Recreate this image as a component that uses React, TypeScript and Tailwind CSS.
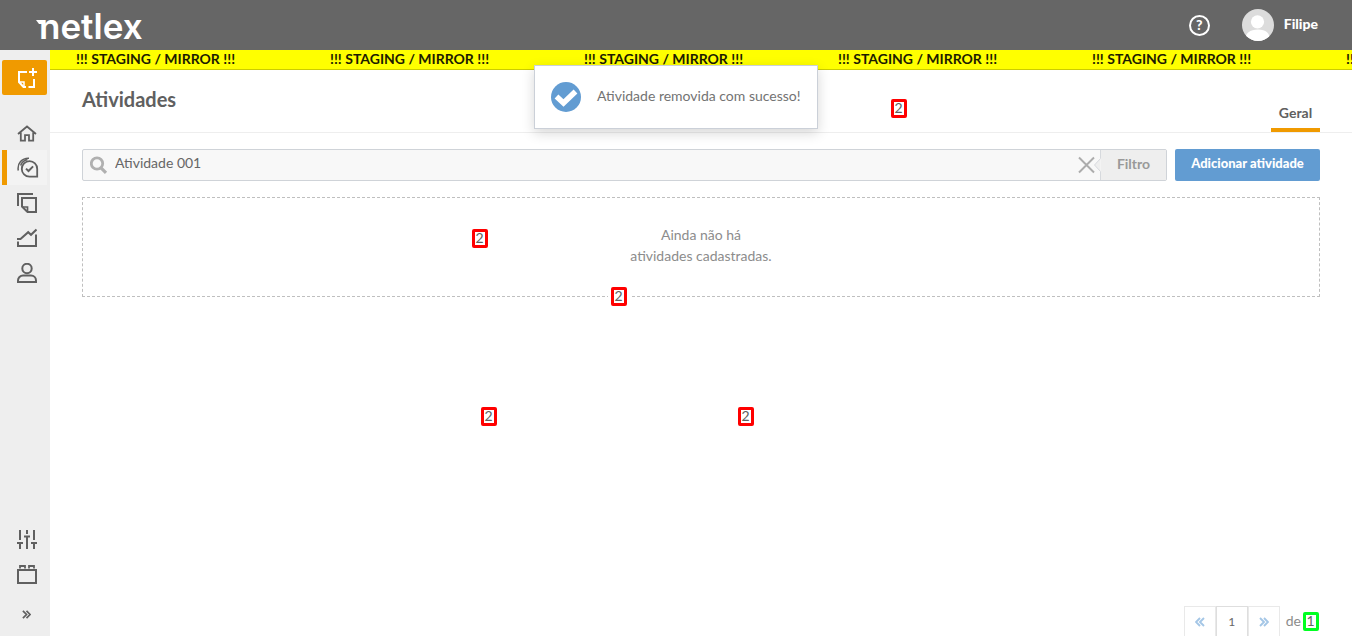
import type { ReactNode } from "react";

function Icon({ children }: { children: ReactNode }) {
  return (
    <svg width="20" height="20" viewBox="0 0 20 20" fill="none" stroke="currentColor" strokeWidth="2" aria-hidden="true">
      {children}
    </svg>
  );
}

const mainLinks = [
  {
    label: "Início",
    icon: (
      <Icon>
        <path d="M1 11 10 3.500l9 7.500M3.800 9.500v8.200h4.200v-5.500h4v5.500h4.200V9.500" strokeWidth="1.800" />
      </Icon>
    ),
  },
  {
    label: "Atividades",
    active: true,
    icon: (
      <svg className="mr-0.5" width="22" height="21" viewBox="0 0 22 21" fill="none" stroke="currentColor" strokeWidth="1.800" aria-hidden="true">
        <path d="M12.500 4.200a7.700 7.700 0 0 1 7.700 7.700v7.700h-7.700a7.700 7.700 0 0 1 0-15.400Z" />
        <path d="m9 11.600 2.500 2.400 4.600-4.600" strokeWidth="2" />
        <path d="M1.300 13.500C0 6.500 5 .9 12 1.200M3.600 8.500C4.800 5.200 7.500 3.300 10.500 2.800" strokeWidth="1.500" />
      </svg>
    ),
  },
  {
    label: "Documentos",
    icon: (
      <Icon>
        <path d="M16 1H1v12" />
        <path d="M5 5h14v14h-8.500L5 13.500V5Z" />
        <path d="M5 14h5.500V19" strokeWidth="1.700" />
      </Icon>
    ),
  },
  {
    label: "Relatórios",
    icon: (
      <Icon>
        <path d="M0 11h3.500l7.700-6.800 2.800 2.600 5.500-5.300" />
        <path d="M1 13.500V18h18V6.500" />
      </Icon>
    ),
  },
  {
    label: "Usuários",
    icon: (
      <Icon>
        <circle cx="10" cy="5.500" r="4.700" />
        <path d="M1 19v-1.500a5 5 0 0 1 5-5h8a5 5 0 0 1 5 5V19H1Z" />
      </Icon>
    ),
  },
];

const footerLinks = [
  {
    label: "Configurações",
    icon: (
      <Icon>
        <path d="M3 0v10M3 14v5M10 0v4M10 7v12M17 0v10M17 14v5" />
        <path d="M0 13h6M7 6.500h6M14 13h6" />
      </Icon>
    ),
  },
  {
    label: "Pacotes",
    icon: (
      <Icon>
        <path d="M1 5h18v13H1Z" />
        <path d="M3 3.500V1h5v2.500M12 3.500V1h5v2.500" strokeWidth="1.800" />
      </Icon>
    ),
  },
];

function RailLink({ label, icon, active }: { label: string; icon: ReactNode; active?: boolean }) {
  return (
    <a
      href="#"
      aria-label={label}
      className={
        active
          ? "flex h-[35px] items-center justify-center border-l-[5px] border-[#f09a00] bg-[#f3f3f3] pl-1"
          : "flex h-[35px] items-center justify-center pl-1"
      }
    >
      {icon}
    </a>
  );
}

function Marker({ value, place, color }: { value: string; place: string; color: string }) {
  return (
    <span
      className={`absolute flex h-[19px] w-4 items-center justify-center rounded-xs border-3 bg-white pr-px pb-0.5 text-sm leading-none ${color} ${place}`}
    >
      {value}
    </span>
  );
}

function Chevrons({ flip, size }: { flip?: boolean; size: number }) {
  return (
    <svg width={size} height={size} viewBox="0 0 10 10" fill="none" stroke="currentColor" strokeWidth="1.900" aria-hidden="true">
      <path d={flip ? "M5 1 1 5l4 4M9 1 5 5l4 4" : "m1 1 4 4-4 4M5 1l4 4-4 4"} />
    </svg>
  );
}

function TopBar() {
  return (
    <header className="flex h-[50px] shrink-0 items-center justify-between bg-[#666] pr-[34px] pl-9 text-white">
      <a href="#" className="relative pt-0.5 pl-[3px] font-[Inter,sans-serif] text-[35px] leading-[50px] font-semibold">
        <svg className="absolute top-[21px] left-0" width="9" height="4" viewBox="0 0 9 4" fill="currentColor" aria-hidden="true">
          <path d="M0 0h9v4H3Z" />
        </svg>
        netlex
      </a>
      <div className="flex items-center">
        <button type="button" aria-label="Ajuda" className="mr-8 flex h-[21px] w-[21px] items-center justify-center rounded-full border-2 border-white text-sm leading-none font-black">
          ?
        </button>
        <svg width="32" height="32" viewBox="0 0 32 32" aria-hidden="true">
          <defs>
            <clipPath id="avatar">
              <circle cx="16" cy="16" r="16" />
            </clipPath>
          </defs>
          <g clipPath="url(#avatar)">
            <path fill="#dcdcdc" d="M0 0h32v32H0z" />
            <circle cx="15.500" cy="12.800" r="6.600" fill="#fff" />
            <path fill="#fff" d="M3 32c0-8 5-11.500 13-11.500S28 24 28 32Z" />
          </g>
        </svg>
        <a href="#" className="ml-[10px] pb-0.5 text-sm font-black">
          Filipe
        </a>
      </div>
    </header>
  );
}

function Rail() {
  return (
    <aside className="flex w-[50px] shrink-0 flex-col bg-[#eee] px-0.5 pt-[10px] pb-1 text-[#606060]">
      <button type="button" aria-label="Novo documento" className="mr-px flex h-[35px] shrink-0 items-center justify-center rounded-xs bg-[#f09a00] pl-1 text-white">
        <svg width="20" height="20" viewBox="0 0 20 20" fill="none" stroke="currentColor" strokeWidth="2" aria-hidden="true">
          <path d="M10 4H2V14l4.500 5H9M11.500 19H17V11" />
          <path d="M2 14h5v4.500" strokeWidth="1.500" />
          <path d="M16 0v8M12 4h8" />
        </svg>
      </button>
      <nav aria-label="Principal" className="mt-5 mr-px">
        {mainLinks.map((link) => (
          <RailLink key={link.label} {...link} />
        ))}
      </nav>
      <nav aria-label="Ferramentas" className="mt-auto mr-px">
        {footerLinks.map((link) => (
          <RailLink key={link.label} {...link} />
        ))}
        <button type="button" aria-label="Expandir menu" className="mt-1 flex h-9 w-full items-center justify-center pl-1">
          <Chevrons size={9} />
        </button>
      </nav>
    </aside>
  );
}

function Toast() {
  return (
    <div role="status" className="absolute top-[65px] left-1/2 flex h-16 w-[284px] -translate-x-1/2 items-center border border-[#cbd0d8] bg-white pl-4 text-sm text-[#737373] shadow-[0_4px_12px_rgba(0,0,0,0.16)]">
      <svg className="mr-4 shrink-0" width="30" height="30" viewBox="0 0 30 30" aria-hidden="true">
        <circle cx="15" cy="15" r="15" fill="#629cd2" />
        <path d="m5.500 14.500 7 6.500L24.500 9.500" fill="none" stroke="#fff" strokeWidth="5.500" />
      </svg>
      <span className="pb-0.5 whitespace-nowrap">Atividade removida com sucesso!</span>
    </div>
  );
}

function SearchBar() {
  return (
    <form className="flex gap-2" onSubmit={(event) => event.preventDefault()}>
      <div className="flex h-8 flex-1 items-center rounded-xs border border-[#cfd3d8] bg-[#f8f8f8]">
        <svg className="ml-[7px] shrink-0" width="18" height="18" viewBox="0 0 18 18" fill="none" stroke="#b0b0b0" aria-hidden="true">
          <circle cx="7" cy="7.500" r="5.700" strokeWidth="2.800" />
          <path d="m11 11.800 5 5" strokeWidth="3.200" />
        </svg>
        <input
          aria-label="Buscar atividade"
          defaultValue="Atividade 001"
          className="h-full min-w-0 flex-1 bg-transparent pb-1.5 pl-[7px] text-sm text-[#666] outline-none"
        />
        <button type="button" aria-label="Limpar busca" className="text-[#acacac]">
          <svg width="23" height="30" viewBox="0 0 23 30" fill="none" stroke="currentColor" aria-hidden="true">
            <path d="m1 7.500 15 15M16 7.500l-15 15" strokeWidth="2" />
            <path d="M22.500 0v8.500L16.500 15l6 6.500V30" fill="#eee" stroke="#d6d9dd" />
          </svg>
        </button>
        <button type="button" className="h-full w-[65px] bg-[#eee] pb-0.5 text-sm font-bold text-[#999]">
          Filtro
        </button>
      </div>
      <button type="button" className="h-8 w-[145px] rounded-xs bg-[#629cd2] pb-0.5 text-[13px] font-black whitespace-nowrap text-white">
        Adicionar atividade
      </button>
    </form>
  );
}

function Pagination() {
  return (
    <nav aria-label="Paginação" className="mr-8 flex h-[30px] shrink-0 items-start justify-end overflow-hidden text-sm text-[#8c8c8c]">
      <button type="button" aria-label="Página anterior" className="flex h-9 w-8 items-center justify-center border border-[#e9e9e9] pb-1 text-[#a4c6e6]">
        <Chevrons flip size={10} />
      </button>
      <button type="button" aria-current="page" className="h-9 w-8 border border-[#dedede] pb-1 text-xs text-[#666]">
        1
      </button>
      <button type="button" aria-label="Próxima página" className="flex h-9 w-8 items-center justify-center border border-[#e9e9e9] pb-1 text-[#a4c6e6]">
        <Chevrons size={10} />
      </button>
      <span className="mt-[5px] mr-[2px] ml-[6px]">de</span>
      <span className="mt-[6px] mr-px flex h-[19px] w-4 items-center justify-center rounded-xs border-3 border-[#00ff22] pr-px pb-0.5 leading-none text-[#666]">
        1
      </span>
    </nav>
  );
}

export default function App() {
  return (
    <div className="relative flex h-screen flex-col overflow-hidden bg-white font-[Lato,sans-serif] text-[#606060]">
      <TopBar />
      <div className="flex min-h-0 flex-1">
        <Rail />
        <main className="flex min-w-0 flex-1 flex-col">
          <div className="flex h-5 shrink-0 gap-[94px] overflow-hidden border-b border-[#cccc00] bg-[#ff0] pl-[26px] text-sm leading-[18px] font-bold whitespace-nowrap text-[#1c1c00]">
            {Array.from({ length: 6 }, (_, i) => (
              <span key={i} className="min-w-40">
                !!! STAGING / MIRROR !!!
              </span>
            ))}
          </div>
          <div className="flex h-[63px] shrink-0 justify-between border-b border-[#eee] px-8">
            <h1 className="pt-[15px] text-xl font-bold">Atividades</h1>
            <a href="#" aria-current="page" className="mt-7 flex w-[49px] justify-center border-b-4 border-[#f09a00] pt-[5px] text-sm font-bold">
              Geral
            </a>
          </div>
          <div className="flex flex-1 flex-col gap-4 px-8 pt-4">
            <SearchBar />
            <p className="border border-dashed border-[#bfbfbf] pt-[26px] pb-[30px] text-center text-sm leading-[21px] text-[#8c8c8c]">
              Ainda não há
              <br />
              atividades cadastradas.
            </p>
          </div>
          <Pagination />
        </main>
      </div>
      <Toast />
      <Marker value="2" color="border-[#f00]" place="top-[99px] left-[891px]" />
      <Marker value="2" color="border-[#f00]" place="top-[229px] left-[472px]" />
      <Marker value="2" color="border-[#f00] ring-3 ring-white" place="top-[287px] left-[611px]" />
      <Marker value="2" color="border-[#f00]" place="top-[407px] left-[481px]" />
      <Marker value="2" color="border-[#f00]" place="top-[407px] left-[738px]" />
    </div>
  );
}
